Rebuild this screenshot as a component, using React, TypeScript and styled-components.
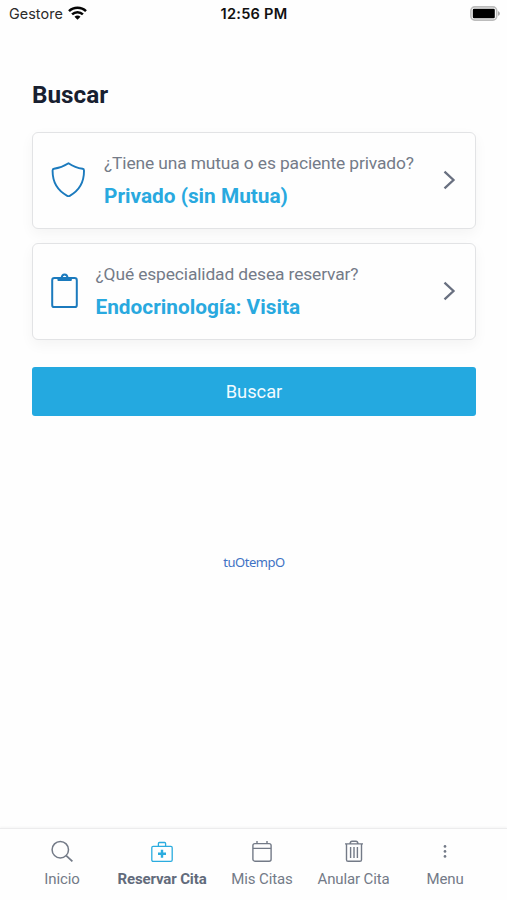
import React from "react";
import styled, { createGlobalStyle } from "styled-components";

const GlobalStyle = createGlobalStyle`
  *, *::before, *::after { box-sizing: border-box; }
  body { margin: 0; background: #fefefe; font-family: Roboto, sans-serif; }
  svg { display: block; flex: none; }
`;

const Screen = styled.div`
  width: 507px;
  height: 900px;
  display: flex;
  flex-direction: column;
  overflow: hidden;
  background: #fefefe;
`;

const StatusBar = styled.header`
  height: 28px;
  padding: 0 6px 2px 9px;
  display: grid;
  grid-template-columns: 1fr auto 1fr;
  align-items: center;
  font-family: Inter, sans-serif;
  color: #111;
`;

const Carrier = styled.div`
  display: flex;
  align-items: center;
  gap: 5px;
  font-size: 14.4px;
  letter-spacing: 0.05px;
  color: #2b2b2b;
`;

const Clock = styled.div`
  margin-right: 2px;
  padding-top: 2px;
  font-size: 14.6px;
  font-weight: 600;
  letter-spacing: 0.25px;
`;

const BatterySlot = styled.div`
  display: flex;
  justify-content: flex-end;
`;

const Main = styled.main`
  flex: 1;
  padding: 0 31px 0 32px;
  display: flex;
  flex-direction: column;
`;

const Title = styled.h1`
  margin: 52px 0 22px;
  font-size: 24.3px;
  line-height: 30px;
  font-weight: 700;
  color: #182030;
`;

const Options = styled.div`
  display: flex;
  flex-direction: column;
  gap: 14px;
`;

const OptionCard = styled.button`
  height: 97px;
  padding: 0 19px 2px 18px;
  display: flex;
  align-items: center;
  border: 1.5px solid #e2e3e5;
  border-radius: 6px;
  background: #fefefe;
  box-shadow: 0 5px 14px rgba(0, 0, 0, 0.045);
  font-family: inherit;
  text-align: left;
`;

const OptionText = styled.div<{ $gap: number }>`
  flex: 1;
  margin-left: ${(p) => p.$gap}px;
  padding-top: 2px;
  white-space: nowrap;
`;

const Question = styled.div`
  font-size: 17.4px;
  line-height: 30px;
  letter-spacing: -0.13px;
  color: #747b88;
`;

const Answer = styled.div`
  margin-top: 1px;
  font-size: 20.8px;
  line-height: 34px;
  font-weight: 700;
  color: #29a9df;
`;

const SearchButton = styled.button`
  height: 49px;
  margin-top: 27px;
  border: 0;
  border-radius: 3px;
  background: #24a9e0;
  color: #f2fbff;
  font-family: inherit;
  font-size: 18.3px;
`;

const Brand = styled.a`
  margin-top: 136px;
  align-self: center;
  font-family: "Noto Sans", sans-serif;
  font-size: 13px;
  letter-spacing: -0.45px;
  line-height: 20px;
  color: #3f72c4;
`;

const TabBar = styled.nav`
  height: 72px;
  padding: 0 12px;
  display: flex;
  border-top: 1px solid #ececed;
  box-shadow: 0 -1px 2px rgba(0, 0, 0, 0.04);
`;

const Tab = styled.div<{ $width: number; $active?: boolean }>`
  width: ${(p) => p.$width}px;
  display: flex;
  flex-direction: column;
  align-items: center;
  padding-top: 11px;
  gap: 5px;
  font-size: 15px;
  line-height: 20px;
  letter-spacing: -0.13px;
  font-weight: ${(p) => (p.$active ? 700 : 400)};
  color: ${(p) => (p.$active ? "#626b7b" : "#737a87")};
  white-space: nowrap;
  svg { color: ${(p) => (p.$active ? "#2bacdf" : "#737a87")}; }
`;

const WifiIcon = () => (
  <svg width="19" height="14" viewBox="0 0 19 14" fill="none" stroke="#050505" strokeWidth="2.5">
    <path d="M1 5.1C5.6.6 13.4.6 18 5.1M4.1 8.3c3-2.9 7.8-2.9 10.8 0" />
    <path d="M6.5 10.7c1.7-1.5 4.3-1.5 6 0l-3 3z" fill="#050505" stroke="none" />
  </svg>
);

const BatteryIcon = () => (
  <svg width="31" height="15" viewBox="0 0 31 15">
    <rect x=".9" y=".9" width="25.8" height="13.2" rx="3.8" fill="#fff" stroke="#bcbcbc" strokeWidth="1.6" />
    <rect x="2.8" y="2.8" width="22" height="9.4" rx="1.2" fill="#000" />
    <path d="M28 5.2c2.5.7 2.5 3.9 0 4.6z" fill="#aaa" />
  </svg>
);

const ShieldIcon = () => (
  <svg width="34" height="36" viewBox="0 0 34 36" fill="none" stroke="#1b7abd" strokeWidth="1.9" strokeLinejoin="round">
    <path d="M17.5 1.2C12.6 4.4 7.6 6.1 3 6.7Q1.6 6.9 1.6 8.4C1.4 20.2 6.6 28.6 16.2 33.8Q17.5 34.5 18.8 33.8C28.2 28.6 33.2 20.2 33 8.4Q33 6.9 31.6 6.7C27 6.1 22.2 4.4 17.5 1.2Z" />
  </svg>
);

const ClipboardIcon = () => (
  <svg width="27" height="36" viewBox="0 0 27 36" fill="none" stroke="#1b7abd" strokeWidth="2">
    <rect x="1.2" y="5.1" width="24.6" height="29" rx="2.2" />
    <path d="M7.4 5.2h3.2c.2-5 5.8-5 6 0h3.2v1.7H7.4z" strokeLinejoin="round" />
    <path d="M7.2 6.2h13" strokeWidth="2.6" />
  </svg>
);

const Chevron = () => (
  <svg width="13" height="20" viewBox="0 0 13 20" fill="none" stroke="#697080" strokeWidth="2.3">
    <path d="m1.5 1.6 9 8.4-9 8.4" />
  </svg>
);

const SearchIcon = () => (
  <svg width="22" height="24" viewBox="0 0 22 24" fill="none" stroke="currentColor" strokeWidth="1.5">
    <circle cx="9.3" cy="9.7" r="8.2" />
    <path d="m15.2 15.7 6.2 5.6" strokeWidth="1.8" />
  </svg>
);

const MedicalCaseIcon = () => (
  <svg width="22" height="24" viewBox="0 0 22 24" fill="none" stroke="currentColor" strokeWidth="1.3">
    <rect x=".8" y="6.4" width="20.4" height="15" rx="1.3" />
    <path d="M7.4 6.4V3.5q0-1 1-1h5.2q1 0 1 1v2.9" />
    <path d="M11 9.7v8M7 13.7h8" strokeWidth="2.4" />
  </svg>
);

const CalendarIcon = () => (
  <svg width="20" height="24" viewBox="0 0 20 24" fill="none" stroke="currentColor" strokeWidth="1.4">
    <rect x=".9" y="3.6" width="18.2" height="17.6" rx="2" />
    <path d="M1 8.4h18M5 1v3M15 1v3" />
  </svg>
);

const TrashIcon = () => (
  <svg width="20" height="24" viewBox="0 0 20 24" fill="none" stroke="currentColor" strokeWidth="1.4">
    <path d="M1 3.9h18M6 3.7Q6.4 1.3 8 1.3h4q1.6 0 2 2.4M2.5 4v15.7q0 1.6 1.6 1.6h11.8q1.6 0 1.6-1.6V4M6.6 7v11M10 7v11M13.4 7v11" />
  </svg>
);

const MoreIcon = () => (
  <svg width="4" height="24" viewBox="0 0 4 24" fill="currentColor">
    <circle cx="2" cy="6.4" r="1.35" />
    <circle cx="2" cy="11.4" r="1.35" />
    <circle cx="2" cy="16.4" r="1.35" />
  </svg>
);

const tabs = [
  { label: "Inicio", width: 100, icon: <SearchIcon /> },
  { label: "Reservar Cita", width: 100, icon: <MedicalCaseIcon />, active: true },
  { label: "Mis Citas", width: 100, icon: <CalendarIcon /> },
  { label: "Anular Cita", width: 83, icon: <TrashIcon /> },
  { label: "Menu", width: 100, icon: <MoreIcon /> },
];

export default function App() {
  return (
    <>
      <GlobalStyle />
      <Screen>
        <StatusBar>
          <Carrier>Gestore<WifiIcon /></Carrier>
          <Clock>12:56 PM</Clock>
          <BatterySlot><BatteryIcon /></BatterySlot>
        </StatusBar>
        <Main>
          <Title>Buscar</Title>
          <Options>
            <OptionCard>
              <ShieldIcon />
              <OptionText $gap={19}>
                <Question>¿Tiene una mutua o es paciente privado?</Question>
                <Answer>Privado (sin Mutua)</Answer>
              </OptionText>
              <Chevron />
            </OptionCard>
            <OptionCard>
              <ClipboardIcon />
              <OptionText $gap={17.5}>
                <Question>¿Qué especialidad desea reservar?</Question>
                <Answer>Endocrinología: Visita</Answer>
              </OptionText>
              <Chevron />
            </OptionCard>
          </Options>
          <SearchButton>Buscar</SearchButton>
          <Brand>tuOtempO</Brand>
        </Main>
        <TabBar>
          {tabs.map((tab) => (
            <Tab key={tab.label} $width={tab.width} $active={tab.active}>
              {tab.icon}
              {tab.label}
            </Tab>
          ))}
        </TabBar>
      </Screen>
    </>
  );
}
